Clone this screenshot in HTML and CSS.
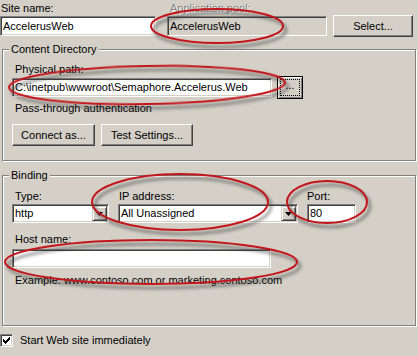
FILE: index.html
```html
<!DOCTYPE html>
<html lang="en">

<head>
    <meta charset="UTF-8">
    <meta name="viewport" content="width=device-width, initial-scale=1.0">
    <title>Add Web Site</title>
    <link rel="stylesheet" href="styles.css">
</head>

<body>

    <div class="dialog">
        <div class="site-row">
            <div class="field site-field">
                <div class="label">Site name:</div>
                <div class="textbox site-name">AccelerusWeb</div>
            </div>
            <div class="field pool-field">
                <div class="label disabled">Application pool:</div>
                <div class="textbox readonly pool-name">AccelerusWeb</div>
            </div>
            <button type="button" class="btn select-btn">Select...</button>
        </div>

        <fieldset class="group content-group">
            <legend>Content Directory</legend>
            <div class="label indent">Physical path:</div>
            <div class="path-row">
                <div class="textbox path">C:\inetpub\wwwroot\Semaphore.Accelerus.Web</div>
                <button type="button" class="btn browse-btn"><span class="focus-rect">...</span></button>
            </div>
            <div class="label indent pass-label">Pass-through authentication</div>
            <div class="btn-row">
                <button type="button" class="btn connect-btn">Connect as...</button>
                <button type="button" class="btn test-btn">Test Settings...</button>
            </div>
        </fieldset>

        <fieldset class="group binding-group">
            <legend>Binding</legend>
            <div class="bind-row">
                <div class="field type-field">
                    <div class="label indent">Type:</div>
                    <div class="combo">
                        <span class="combo-text">http</span>
                        <span class="drop"><svg width="7" height="4" viewBox="0 0 7 4"><path d="M0 0h7l-3.5 4z" /></svg></span>
                    </div>
                </div>
                <div class="field ip-field">
                    <div class="label">IP address:</div>
                    <div class="combo">
                        <span class="combo-text">All Unassigned</span>
                        <span class="drop"><svg width="7" height="4" viewBox="0 0 7 4"><path d="M0 0h7l-3.5 4z" /></svg></span>
                    </div>
                </div>
                <div class="field port-field">
                    <div class="label">Port:</div>
                    <div class="textbox port">80</div>
                </div>
            </div>
            <div class="label indent host-label">Host name:</div>
            <div class="textbox host"></div>
            <div class="label indent hint">Example: www.contoso.com or marketing.contoso.com</div>
        </fieldset>

        <div class="start-row">
            <span class="checkbox">
                <svg width="7" height="7" viewBox="0 0 7 7"><path d="M6 0h1v1h-1z M5 1h2v1h-2z M0 2h1v1h-1z M4 2h3v1h-3z M0 3h2v1h-2z M3 3h3v1h-3z M0 4h5v1h-5z M1 5h3v1h-3z M2 6h1v1h-1z" /></svg>
            </span>
            <span class="start-text">Start Web site immediately</span>
        </div>

        <!-- red marker rings drawn over the dialog -->
        <svg class="marks" width="418" height="356" viewBox="0 0 418 356">
            <defs>
                <filter id="soft" x="-20%" y="-40%" width="140%" height="180%">
                    <feGaussianBlur stdDeviation="1.6" />
                </filter>
            </defs>
            <g class="shade" transform="translate(3 4)" filter="url(#soft)">
                <ellipse cx="217" cy="26" rx="66" ry="17" />
                <ellipse cx="147" cy="85" rx="138" ry="19" transform="rotate(-1 147 85)" />
                <ellipse cx="180" cy="202" rx="88" ry="28" />
                <ellipse cx="327" cy="202" rx="40" ry="21" />
                <ellipse cx="151" cy="262" rx="146" ry="22" />
            </g>
            <g class="ring">
                <ellipse cx="217" cy="26" rx="66" ry="17" />
                <ellipse cx="147" cy="85" rx="138" ry="19" transform="rotate(-1 147 85)" />
                <ellipse cx="180" cy="202" rx="88" ry="28" />
                <ellipse cx="327" cy="202" rx="40" ry="21" />
                <ellipse cx="151" cy="262" rx="146" ry="22" />
            </g>
        </svg>
    </div>

</body>

</html>
```

FILE: styles.css
```css
body {
    margin: 0;
    background-color: #d4d0c8;
    font-family: "Liberation Sans", Arial, sans-serif;
    font-size: 11px;
    color: #000;
}

.dialog {
    position: relative;
    width: 418px;
    height: 356px;
    overflow: hidden;
}

.label {
    line-height: 13px;
    white-space: nowrap;
}

.indent {
    padding-left: 3px;
}

.disabled {
    color: #808080;
    text-shadow: 1px 1px 0 #fff;
}

/* sunken edit box */
.textbox {
    box-sizing: border-box;
    height: 19px;
    line-height: 17px;
    padding-left: 2px;
    background-color: #fff;
    border: 1px solid;
    border-color: #808080 #fff #fff #808080;
    box-shadow: inset 1px 1px 0 #404040, inset -1px -1px 0 #d4d0c8;
    white-space: nowrap;
    overflow: hidden;
}

.readonly {
    background-color: #d4d0c8;
}

/* raised push button */
.btn {
    box-sizing: border-box;
    height: 22px;
    padding: 0;
    font-family: inherit;
    font-size: 11px;
    color: #000;
    background-color: #d4d0c8;
    border: 1px solid;
    border-color: #fff #404040 #404040 #fff;
    box-shadow: inset -1px -1px 0 #808080;
}

.site-row {
    display: flex;
    align-items: flex-end;
    padding-top: 2px;
}

.site-field {
    width: 156px;
}

.site-field .label {
    padding-left: 1px;
}

.site-name {
    margin-top: 1px;
    height: 20px;
    line-height: 18px;
}

.pool-field {
    width: 160px;
    margin-left: 11px;
}

.pool-field .label {
    padding-left: 3px;
}

.pool-name {
    margin-top: 1px;
    height: 20px;
    line-height: 18px;
}

.select-btn {
    width: 80px;
    margin-left: 6px;
    margin-bottom: -1px;
}

/* etched group box */
.group {
    box-sizing: border-box;
    width: 414px;
    min-width: 0;
    margin: 0 0 0 2px;
    padding: 0 9px;
    border: 1px solid #808080;
    box-shadow: 1px 1px 0 #fff, inset 1px 1px 0 #fff;
}

.group legend {
    margin-left: -3px;
    padding: 0 2px;
    line-height: 13px;
    background-color: #d4d0c8;
}

.content-group {
    margin-top: 7px;
    padding-top: 7px;
    padding-bottom: 14px;
}

.path-row {
    display: flex;
    align-items: center;
}

.path {
    width: 260px;
}

.browse-btn {
    width: 26px;
    height: 23px;
    margin-left: 5px;
    padding: 2px;
    border: 1px solid #000;
    box-shadow: inset 1px 1px 0 #fff, inset -1px -1px 0 #808080;
}

.focus-rect {
    display: block;
    box-sizing: border-box;
    height: 100%;
    border: 1px dotted #000;
    line-height: 11px;
    text-align: center;
}

.pass-label {
    margin-top: 3px;
}

.btn-row {
    display: flex;
    gap: 6px;
    margin-top: 9px;
}

.connect-btn {
    width: 83px;
}

.test-btn {
    width: 92px;
}

.binding-group {
    margin-top: 8px;
    padding-top: 8px;
    padding-bottom: 38px;
}

.bind-row {
    display: flex;
    gap: 9px;
}

.type-field {
    width: 97px;
}

.ip-field {
    width: 180px;
}

.ip-field .label {
    padding-left: 1px;
}

.port-field {
    width: 49px;
}

.combo {
    box-sizing: border-box;
    display: flex;
    height: 19px;
    margin-top: 1px;
    padding: 1px;
    background-color: #fff;
    border: 1px solid;
    border-color: #808080 #fff #fff #808080;
    box-shadow: inset 1px 1px 0 #404040, inset -1px -1px 0 #d4d0c8;
}

.combo-text {
    flex: 1;
    padding-left: 1px;
    line-height: 15px;
    white-space: nowrap;
}

.drop {
    box-sizing: border-box;
    display: flex;
    align-items: center;
    justify-content: center;
    width: 15px;
    background-color: #d4d0c8;
    border: 1px solid;
    border-color: #d4d0c8 #404040 #404040 #d4d0c8;
    box-shadow: inset 1px 1px 0 #fff, inset -1px -1px 0 #808080;
}

.drop svg {
    display: block;
    margin-top: 1px;
}

.port {
    margin-top: 1px;
}

.host-label {
    margin-top: 10px;
}

.host {
    width: 259px;
    margin-top: 3px;
}

.hint {
    margin-top: 6px;
}

.start-row {
    display: flex;
    align-items: center;
    margin-top: 8px;
}

.checkbox {
    box-sizing: border-box;
    display: flex;
    align-items: center;
    justify-content: center;
    width: 13px;
    height: 13px;
    background-color: #fff;
    border: 1px solid;
    border-color: #808080 #fff #fff #808080;
    box-shadow: inset 1px 1px 0 #404040, inset -1px -1px 0 #d4d0c8;
}

.checkbox svg {
    display: block;
    shape-rendering: crispEdges;
}

.start-text {
    margin-left: 7px;
    line-height: 13px;
}

.marks {
    position: absolute;
    top: 0;
    left: 0;
    pointer-events: none;
}

.marks ellipse {
    fill: none;
}

.shade ellipse {
    stroke: rgba(50, 50, 50, 0.45);
    stroke-width: 3;
}

.ring ellipse {
    stroke: #c3161c;
    stroke-width: 2;
}
```
